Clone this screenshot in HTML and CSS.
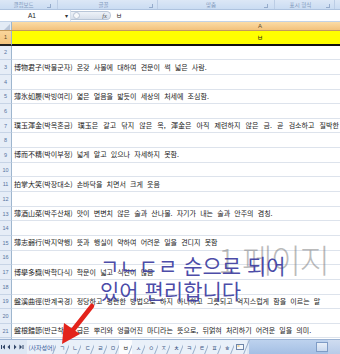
FILE: index.html
```html
<!DOCTYPE html>
<html lang="ko">
<head>
<meta charset="utf-8">
<link rel="stylesheet" href="styles.css">
</head>
<body>
<div class="app">
  <div class="ribbon">
    <div class="grp g1"><span class="lbl">클립보드</span><i class="launch"></i></div>
    <div class="grp g2"><span class="lbl">글꼴</span><i class="launch"></i></div>
    <div class="grp g3"><span class="lbl">맞춤</span><i class="launch"></i></div>
    <div class="grp g4"><span class="lbl">표시 형식</span><i class="launch"></i></div>
    <div class="grp g5"></div>
  </div>
  <div class="fbar">
    <div class="namebox"><span class="ref">A1</span><span class="dd">▾</span></div>
    <div class="fxpill"><span class="knob"></span><span class="fx">fx</span></div>
    <div class="finput">ㅂ</div>
  </div>
  <div class="colhdr">
    <div class="corner"><svg width="12" height="9" viewBox="0 0 12 9"><polygon points="10,2 10,8 4,8" fill="#b9c6d8"/></svg></div>
    <div class="colA">A</div>
  </div>
  <div class="grid">
    <div class="row first"><div class="rh">1</div><div class="cell center">ㅂ</div></div>
    <div class="row"><div class="rh">2</div><div class="cell"></div></div>
    <div class="row"><div class="rh">3</div><div class="cell">博物君子(박물군자) 온갖 사물에 대하여 견문이 썩 넓은 사람.</div></div>
    <div class="row"><div class="rh">4</div><div class="cell"></div></div>
    <div class="row"><div class="rh">5</div><div class="cell">薄氷如履(박빙여리) 엷은 얼음을 밟듯이 세상의 처세에 조심함.</div></div>
    <div class="row"><div class="rh">6</div><div class="cell"></div></div>
    <div class="row"><div class="rh">7</div><div class="cell wide7">璞玉渾金(박옥혼금) 璞玉은 갈고 닦지 않은 옥, 渾金은 아직 제련하지 않은 금. 곧 검소하고 질박한</div></div>
    <div class="row"><div class="rh">8</div><div class="cell"></div></div>
    <div class="row"><div class="rh">9</div><div class="cell">博而不精(박이부정) 넓게 알고 있으나 자세하지 못함.</div></div>
    <div class="row"><div class="rh">10</div><div class="cell"></div></div>
    <div class="row"><div class="rh">11</div><div class="cell">拍掌大笑(박장대소) 손바닥을 치면서 크게 웃음</div></div>
    <div class="row"><div class="rh">12</div><div class="cell"></div></div>
    <div class="row"><div class="rh">13</div><div class="cell">薄酒山菜(박주산채) 맛이 변변치 않은 술과 산나물. 자기가 내는 술과 안주의 겸칭.</div></div>
    <div class="row"><div class="rh">14</div><div class="cell"></div></div>
    <div class="row"><div class="rh">15</div><div class="cell">薄志弱行(박지약행) 뜻과 행실이 약하여 어려운 일을 견디지 못함</div></div>
    <div class="row"><div class="rh">16</div><div class="cell"></div></div>
    <div class="row"><div class="rh">17</div><div class="cell">博學多識(박학다식) 학문이 넓고 식견이 많음</div></div>
    <div class="row"><div class="rh">18</div><div class="cell"></div></div>
    <div class="row"><div class="rh">19</div><div class="cell">盤溪曲徑(반계곡경) 정당하고 평탄한 방법으로 하지 아니하고 그릇되고 억지스럽게 함을 이르는 말</div></div>
    <div class="row"><div class="rh">20</div><div class="cell"></div></div>
    <div class="row"><div class="rh">21</div><div class="cell">盤根錯節(반근착절) 굽은 뿌리와 엉클어진 마디라는 뜻으로, 뒤얽혀 처리하기 어려운 일을 의미.</div></div>
    <div class="row"><div class="rh">22</div><div class="cell"></div></div>
  </div>
  <div class="tabs">
    <div class="nav">
      <svg width="26" height="8" viewBox="0 0 26 8">
        <rect x="1" y="2" width="1" height="4" fill="#2f4466"/><polygon points="5,1.5 2.5,4 5,6.5" fill="#2f4466"/>
        <polygon points="10,1.5 7.5,4 10,6.5" fill="#2f4466"/>
        <polygon points="14,1.5 16.5,4 14,6.5" fill="#2f4466"/>
        <polygon points="19.5,1.5 22,4 19.5,6.5" fill="#2f4466"/><rect x="22.5" y="2" width="1" height="4" fill="#2f4466"/>
      </svg>
    </div>
    <div class="tab wide">(사자성어)</div>
    <div class="tab">ㄱ</div>
    <div class="tab">ㄴ</div>
    <div class="tab">ㄷ</div>
    <div class="tab">ㄹ</div>
    <div class="tab">ㅁ</div>
    <div class="tab active">ㅂ</div>
    <div class="tab">ㅅ</div>
    <div class="tab">ㅇ</div>
    <div class="tab">ㅈ</div>
    <div class="tab">ㅊ</div>
    <div class="tab">ㅋ</div>
    <div class="tab">ㅌ</div>
    <div class="tab">ㅍ</div>
    <div class="tab">ㅎ</div>
    <div class="tab icon"><svg width="8" height="6" viewBox="0 0 8 6"><rect x="0.5" y="0.5" width="7" height="5" fill="#f4f7fb" stroke="#6d84a8"/><rect x="1.5" y="1.5" width="2" height="1" fill="#e0b040"/></svg></div>
    <div class="hscroll"><span class="split"></span><span class="thumb"></span><span class="rest"></span></div>
  </div>

  <div class="pagemark">1 페이지</div>
  <div class="note">ㄱㄴㄷㄹ 순으로 되어<br>있어 편리합니다</div>
  <svg class="arrow" width="340" height="354" viewBox="0 0 340 354">
    <line x1="92" y1="306" x2="73" y2="330" stroke="#e3231b" stroke-width="4.5" stroke-linecap="round"/>
    <polygon points="62,344 64,323 80,334" fill="#e3231b"/>
  </svg>
</div>
</body>
</html>
```

FILE: styles.css
```css
* { box-sizing: border-box; margin: 0; padding: 0; }
html, body { width: 340px; height: 354px; overflow: hidden; background: #fff; }
body { font-family: "Noto Sans CJK KR", "Noto Sans", sans-serif; }

.app { position: relative; width: 340px; height: 354px; display: flex; flex-direction: column; overflow: hidden; }

/* ribbon group labels */
.ribbon { height: 10px; flex: none; display: flex; background: linear-gradient(#dce7f6, #cadcf2); border-bottom: 1px solid #aec3df; }
.grp { display: flex; align-items: center; border-right: 1px solid #bccde5; position: relative; }
.g1 { width: 58px; padding-right: 10px; }
.g2 { width: 100px; padding-right: 8px; }
.g3 { width: 117px; padding-right: 10px; }
.g4 { width: 60px; padding-right: 8px; }
.g5 { flex: 1; border-right: none; }
.lbl { flex: 1; text-align: center; font-size: 5.5px; line-height: 10px; color: #8199bb; white-space: nowrap; }
.launch { width: 4px; height: 4px; border-right: 1px solid #95abcb; border-bottom: 1px solid #95abcb; margin-right: -4px; margin-top: 2px; }

/* formula bar */
.fbar { height: 12px; flex: none; display: flex; align-items: stretch; background: #fff; border-bottom: 1px solid #c2d2e6; }
.namebox { width: 71px; display: flex; align-items: center; border-right: 1px solid #d6e0ec; background: #fff; }
.ref { flex: 1; text-align: center; font-size: 6.5px; color: #222; padding-left: 2px; font-family: "Liberation Sans", sans-serif; }
.dd { width: 8px; font-size: 6px; color: #333; text-align: center; }
.fxpill { width: 40px; display: flex; align-items: center; justify-content: space-between; padding: 0 3px 0 2px; background: linear-gradient(#eef2f8, #d7dfeb); border-radius: 0 6px 6px 0; margin: 1px 0; border: 1px solid #b9c6d8; border-left: none; }
.knob { width: 7px; height: 7px; border-radius: 50%; background: #f6f8fb; border: 1px solid #b7c3d4; }
.fx { font-family: "Liberation Serif", serif; font-style: italic; font-size: 6.5px; color: #555; }
.finput { flex: 1; font-size: 6.5px; line-height: 10px; padding-left: 5px; color: #222; }

/* column header */
.colhdr { height: 9px; flex: none; display: flex; border-bottom: 1px solid #c49a5a; }
.corner { width: 12px; background: #e3ebf5; border-right: 1px solid #9eb6ce; }
.corner svg { display: block; }
.colA { flex: 1; background: linear-gradient(#fbdca6, #f3c27c); font-size: 6px; line-height: 8px; text-align: center; padding-left: 168px; color: #5c4a2c; font-family: "Liberation Sans", sans-serif; }

/* grid */
.grid { flex: 1; display: grid; grid-auto-rows: 14.65px; align-content: start; overflow: hidden; min-height: 0; }
.row { display: flex; min-width: 0; }
.rh { width: 12px; flex: none; background: #e6edf7; border-right: 1px solid #9eb6ce; border-bottom: 1px solid #c7d4e6; font-size: 5.5px; color: #5773a0; display: flex; align-items: center; justify-content: center; font-family: "Liberation Sans", sans-serif; }
.cell { flex: 1; min-width: 0; white-space: nowrap; overflow: hidden; border-bottom: 1px solid #dde3ec; font-size: 7px; line-height: 13px; padding-left: 2px; color: #1a1a1a; word-spacing: 2.2px; display: flex; align-items: center; }
.wide7 { word-spacing: 3.2px; }
.center { justify-content: center; padding-left: 168px; }
.first .rh { background: linear-gradient(#f9d59a, #f4c57e); color: #5c4a2c; border-bottom: 2px solid #222; }
.first .cell { background: #ffff00; border-bottom: 2px solid #111; font-size: 6.5px; }

/* sheet tabs */
.tabs { height: 15px; flex: none; display: flex; align-items: stretch; background: #dde7f4; border-top: 1px solid #9cb3d3; }
.nav { width: 27px; display: flex; align-items: center; }
.nav svg { display: block; }
.tab { width: 12.7px; display: flex; align-items: center; justify-content: center; font-size: 6px; color: #3a5582; position: relative; background: #e9f0f9; }
.tab::after { content: ""; position: absolute; right: 0; top: 0; bottom: 0; width: 1px; background: #97acc9; transform: skewX(-22deg); }
.wide { width: 29px; font-size: 6px; color: #34599a; }
.active { background: #fbfcfe; color: #222; }
.icon { width: 13px; }
.hscroll { flex: 1; display: flex; align-items: stretch; background: linear-gradient(#bdd2ee, #a4bfe4); margin-left: 2px; }
.split { flex: 1; }
.thumb { width: 12px; margin: 2px 0; background: linear-gradient(#e8eff9, #c9d9ef); border: 1px solid #7f9cc6; }
.rest { width: 12px; background: linear-gradient(#cfdcf0, #b7cbe8); }

/* overlays */
.pagemark { position: absolute; left: 218px; top: 238px; font-size: 33px; line-height: 42px; color: rgba(120, 120, 120, 0.5); font-weight: 300; letter-spacing: -1.5px; white-space: nowrap; }
.note { position: absolute; left: 100px; top: 253px; font-size: 21px; line-height: 25px; color: rgba(58, 58, 160, 0.92); white-space: nowrap; }
.arrow { position: absolute; left: 0; top: 0; pointer-events: none; }
```
